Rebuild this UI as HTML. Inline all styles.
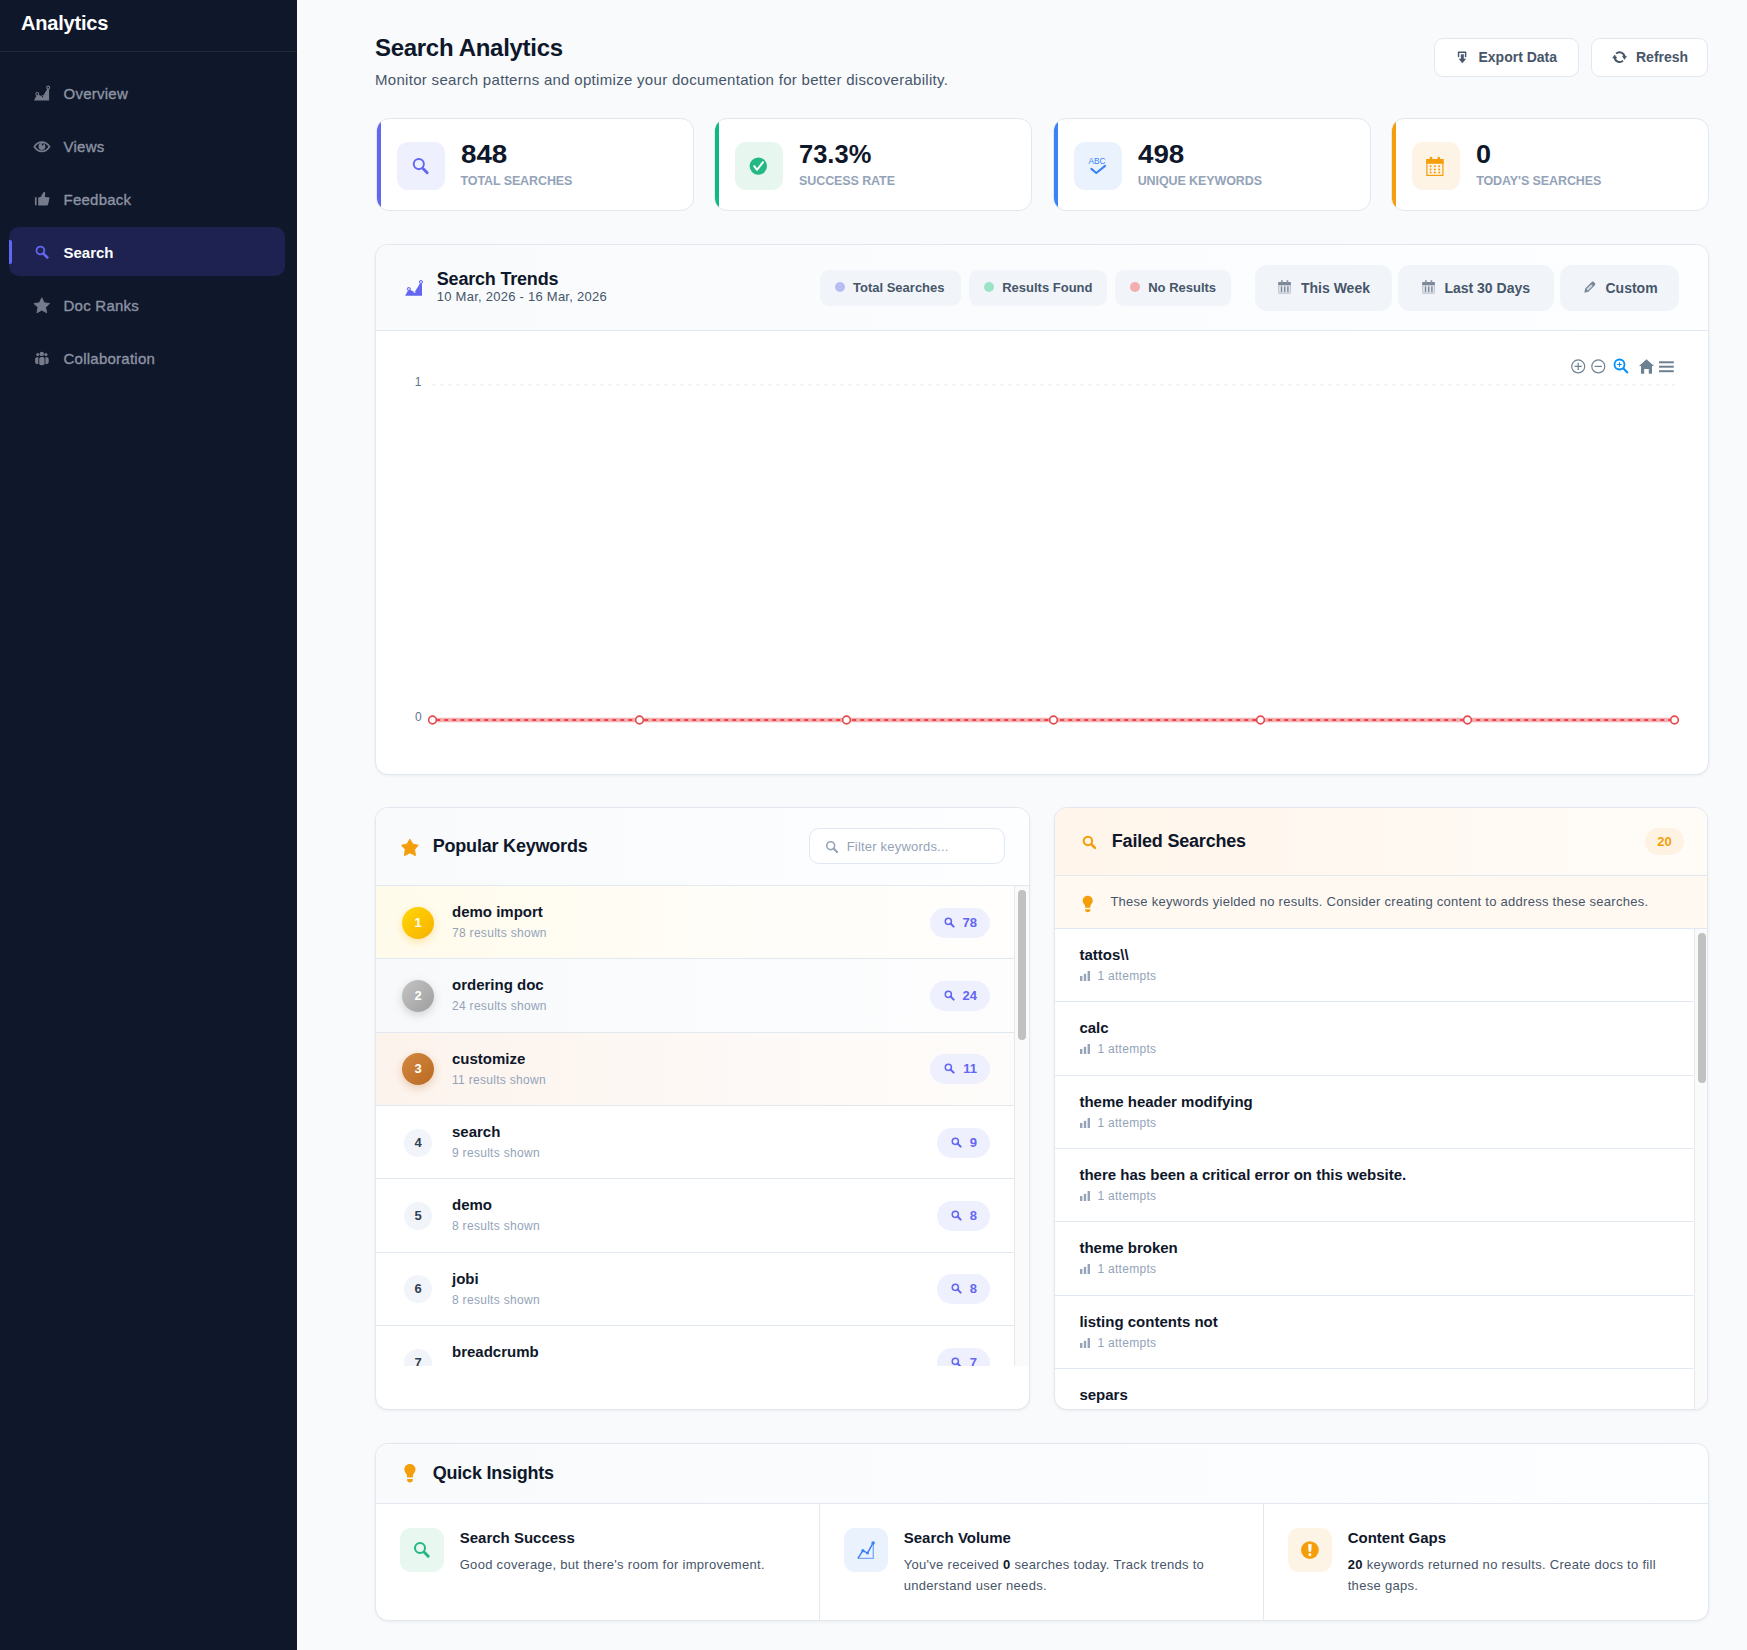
<!DOCTYPE html>
<html><head><meta charset="utf-8">
<style>
*{box-sizing:border-box;margin:0;padding:0}
html,body{width:1747px;height:1650px;overflow:hidden;background:#f8fafc;font-family:"Liberation Sans",sans-serif;color:#0f172a}
.abs{position:absolute}
.nw{white-space:nowrap}
/* sidebar */
#sb{position:absolute;left:0;top:0;width:297px;height:1650px;background:#0f172a}
#sb .brand{position:absolute;left:21px;top:9px;font-size:20px;font-weight:700;color:#fff;line-height:28px;letter-spacing:-0.2px}
#sb .sep{position:absolute;left:0;top:51px;width:297px;height:1px;background:#1f2937}
.nav{position:absolute;left:9px;width:276px;height:49px;border-radius:10px}
.nav .ic{position:absolute;left:19px;top:12px;width:30px;height:30px}
.nav .tx{position:absolute;left:54.5px;top:15.5px;font-size:15px;line-height:20px;font-weight:400;color:#8d93a3;letter-spacing:0.25px;-webkit-text-stroke:0.35px #8d93a3}
.nav.act{background:#1e2250}
.nav.act .tx{color:#fff;font-weight:700;letter-spacing:0;-webkit-text-stroke:0}
.nav.act .bar{position:absolute;left:0;top:13px;width:3px;height:24px;background:#6366f1;border-radius:0 2px 2px 0}
/* main */
.card{position:absolute;background:#fff;border:1px solid #e2e8f0;border-radius:13px;overflow:hidden;box-shadow:0 1px 3px rgba(15,23,42,0.06)}
.btn{position:absolute;height:39px;background:#fff;border:1px solid #e2e8f0;border-radius:9px;font-size:14px;font-weight:700;color:#475569}
.stat{position:absolute;top:118px;height:92.5px;width:318px;background:#fff;border:1px solid #e2e8f0;border-radius:13px;overflow:hidden}
.stat .acc{position:absolute;left:0;top:0;bottom:0;width:4px}
.stat .ib{position:absolute;left:20px;top:22.5px;width:48px;height:48px;border-radius:11px}
.stat .num{position:absolute;left:84px;top:19.9px;font-size:25px;line-height:30px;font-weight:700;color:#0f172a;letter-spacing:0;transform-origin:0 50%}
.stat .lab{position:absolute;left:84px;top:53.8px;font-size:12.5px;line-height:16px;font-weight:700;color:#94a3b8;letter-spacing:-0.1px}
.pill{position:absolute;top:269px;height:36px;background:#f1f5f9;border-radius:9px;font-size:13px;font-weight:700;color:#475569}
.pill .dot{position:absolute;left:15px;top:12.2px;width:10px;height:10px;border-radius:50%}
.pill .t{position:absolute;left:33px;top:10px;line-height:16px}
.rb{position:absolute;top:264.5px;height:46px;background:#f1f5f9;border-radius:12px;font-size:14px;font-weight:700;color:#475569}
.rb svg{position:absolute}
.rb .t{position:absolute;top:14.5px;line-height:18px}
.hdr{position:absolute;left:0;right:0;top:0;background:linear-gradient(90deg,#f8fafc,#fdfeff);border-bottom:1px solid #e2e8f0}
.kw{position:absolute;left:0;width:638px;height:73.33px;border-bottom:1px solid #e2e8f0}
.kw .bd{position:absolute;left:26px;top:20.5px;width:32px;height:32px;border-radius:50%;color:#fff;font-size:13px;font-weight:700;text-align:center;line-height:32px}
.kw .bd.pl{left:28px;top:22.5px;width:28px;height:28px;line-height:28px;background:#f1f5f9;color:#334155}
.kw .nm{position:absolute;left:76px;top:16px;font-size:15px;line-height:20px;font-weight:700;color:#0f172a}
.kw .sub{position:absolute;left:76px;top:39px;font-size:12px;line-height:16px;color:#94a3b8;letter-spacing:0.3px}
.kw .cnt{position:absolute;right:24px;top:21.5px;height:30px;border-radius:15px;background:#eef0fd;color:#6366f1;font-size:13px;font-weight:700;line-height:30px;padding:0 13px 0 14px}
.kw .cnt svg{vertical-align:-1px;margin-right:8px}
.fs{position:absolute;left:0;width:638px;height:73.33px;border-bottom:1px solid #e2e8f0}
.fs .nm{position:absolute;left:24px;top:16px;font-size:15px;line-height:20px;font-weight:700;color:#0f172a}
.fs .sub{position:absolute;left:25px;top:39px;font-size:12px;line-height:16px;color:#94a3b8;letter-spacing:0.3px}
.fs .sub svg{vertical-align:-1px;margin-right:7px}
.sbtrack{position:absolute;width:15px;background:#fafafa;border-left:1px solid #e8e8e8}
.sbthumb{position:absolute;left:3px;width:8px;border-radius:4px;background:#c1c1c1}
.qi{position:absolute;top:61px;height:116px;width:444px}
.qi .ib{position:absolute;left:23.5px;top:23.5px;width:44px;height:44px;border-radius:11px}
.qi .tt{position:absolute;left:83.7px;top:24.3px;font-size:15px;line-height:20px;font-weight:700;color:#0f172a}
.qi .ds{position:absolute;left:83.7px;top:49.8px;width:340px;font-size:13px;line-height:21px;color:#475569;letter-spacing:0.3px}
</style></head><body>

<div id="sb">
  <div class="brand">Analytics</div>
  <div class="sep"></div>
  <div class="nav" style="top:68px">
    <svg class="ic" viewBox="0 0 30 30"><path d="M6 20.4 L9.3 14 L14.5 16.7 L20.2 7.6 L21.1 8.3 L21.1 20.4 Z" fill="#767b8b"/><circle cx="9.3" cy="14" r="1.45" fill="#0f172a" stroke="#767b8b" stroke-width="1.1"/><circle cx="14.5" cy="16.7" r="1.1" fill="#0f172a" stroke="#767b8b" stroke-width="1"/><circle cx="20.2" cy="7.6" r="1.45" fill="#0f172a" stroke="#767b8b" stroke-width="1.1"/></svg>
    <div class="tx">Overview</div>
  </div>
  <div class="nav" style="top:121px">
    <svg class="ic" viewBox="0 0 30 30"><path d="M6.3 13.7 C8.8 9.8 12 9.1 13.9 9.1 C15.8 9.1 19 9.8 21.5 13.7 C19 17.6 15.8 18.3 13.9 18.3 C12 18.3 8.8 17.6 6.3 13.7 Z" fill="none" stroke="#767b8b" stroke-width="1.7"/><circle cx="13.9" cy="13.5" r="3.4" fill="#767b8b"/><circle cx="14.7" cy="11.5" r="0.95" fill="#0f172a"/></svg>
    <div class="tx">Views</div>
  </div>
  <div class="nav" style="top:174px">
    <svg class="ic" viewBox="0 0 30 30"><rect x="6.9" y="11.1" width="1.7" height="8.4" rx="0.8" fill="#767b8b"/><path d="M10.2 11.4 L12.6 11.1 L15.3 6.6 C15.8 5.7 17.3 5.8 17.2 7 L16.9 11.1 L20.6 11.2 C21.3 11.2 21.6 11.8 21.4 12.5 L20.1 18.6 C19.9 19.2 19.4 19.5 18.8 19.5 L10.2 19.5 Z" fill="#767b8b"/></svg>
    <div class="tx">Feedback</div>
  </div>
  <div class="nav act" style="top:227px">
    <div class="bar"></div>
    <svg class="ic" viewBox="0 0 30 30"><circle cx="12.4" cy="11.5" r="3.9" fill="none" stroke="#6366f1" stroke-width="1.8"/><path d="M15.2 14.4 L19.3 18.5" stroke="#6366f1" stroke-width="2.6" stroke-linecap="round"/></svg>
    <div class="tx">Search</div>
  </div>
  <div class="nav" style="top:280px">
    <svg class="ic" viewBox="0 0 30 30"><path d="M13.80 5.80 L16.15 10.86 L21.69 11.54 L17.60 15.34 L18.68 20.81 L13.80 18.10 L8.92 20.81 L10.00 15.34 L5.91 11.54 L11.45 10.86 Z" fill="#767b8b" stroke="#767b8b" stroke-width="0.9" stroke-linejoin="round"/></svg>
    <div class="tx">Doc Ranks</div>
  </div>
  <div class="nav" style="top:333px">
    <svg class="ic" viewBox="0 0 30 30"><circle cx="13.8" cy="8.9" r="2.2" fill="#767b8b"/><circle cx="9.8" cy="9.5" r="1.6" fill="#767b8b"/><circle cx="17.9" cy="9.5" r="1.6" fill="#767b8b"/><rect x="11.2" y="12" width="5.4" height="8.2" rx="2" fill="#767b8b"/><path d="M7.1 14.5 C7.1 12.8 8.2 12.2 9.5 12.2 L10.3 12.2 L10.3 19.1 L9.3 19.1 C8 19.1 7.1 18.2 7.1 16.8 Z" fill="#767b8b"/><path d="M20.7 14.5 C20.7 12.8 19.6 12.2 18.3 12.2 L17.4 12.2 L17.4 19.1 L18.5 19.1 C19.8 19.1 20.7 18.2 20.7 16.8 Z" fill="#767b8b"/></svg>
    <div class="tx">Collaboration</div>
  </div>
</div>

<!-- page header -->
<div class="abs nw" style="left:375px;top:32px;font-size:24px;line-height:32px;font-weight:700;color:#0f172a;letter-spacing:-0.3px">Search Analytics</div>
<div class="abs nw" style="left:375px;top:68.5px;font-size:15px;line-height:22px;color:#475569;letter-spacing:0.3px">Monitor search patterns and optimize your documentation for better discoverability.</div>

<div class="btn" style="left:1433.5px;top:37.5px;width:145px">
  <svg class="abs" style="left:17.5px;top:6.5px" width="20" height="23" viewBox="0 0 20 23"><path d="M6.55 11.6 V7.25 H13.65 V11.6" fill="none" stroke="#475569" stroke-width="1.45" stroke-linecap="round" stroke-linejoin="round"/><path d="M9.06 9.5 H11.7 V13.9 H13.7 L10.35 18.1 L7.1 13.9 H9.06 Z" fill="#475569" stroke="#475569" stroke-width="0.4" stroke-linejoin="round"/></svg>
  <div class="abs nw" style="left:44px;top:9.2px;line-height:18px">Export Data</div>
</div>
<div class="btn" style="left:1591px;top:37.5px;width:117px">
  <svg class="abs" style="left:16px;top:6.5px" width="23" height="23" viewBox="0 0 23 23"><path d="M8.1 8.67 A4.9 4.9 0 0 1 16.47 12.13" fill="none" stroke="#475569" stroke-width="1.9"/><path d="M14.4 11.2 H18.6 L16.5 14.4 Z" fill="#475569" stroke="#475569" stroke-width="0.5" stroke-linejoin="round"/><path d="M6.67 12.13 A4.9 4.9 0 0 0 15.03 15.59" fill="none" stroke="#475569" stroke-width="1.9"/><path d="M4.6 13.1 H8.8 L6.7 9.9 Z" fill="#475569" stroke="#475569" stroke-width="0.5" stroke-linejoin="round"/></svg>
  <div class="abs nw" style="left:44px;top:9.6px;line-height:18px">Refresh</div>
</div>

<!-- stat cards -->
<div class="stat" style="left:375.5px">
  <div class="acc" style="background:#6366f1"></div>
  <div class="ib" style="background:#eef0fe"><svg class="abs" style="left:0;top:0" width="48" height="48" viewBox="0 0 48 48"><circle cx="21.8" cy="22.1" r="5.05" fill="none" stroke="#6366f1" stroke-width="1.95"/><path d="M26 26.5 L30.2 30.7" stroke="#6366f1" stroke-width="2.9" stroke-linecap="round"/></svg></div>
  <div class="num" style="transform:scaleX(1.11)">848</div>
  <div class="lab">TOTAL SEARCHES</div>
</div>
<div class="stat" style="left:714.1px">
  <div class="acc" style="background:#10b981"></div>
  <div class="ib" style="background:#e7f7f0"><svg class="abs" style="left:0;top:0" width="48" height="48" viewBox="0 0 48 48"><circle cx="23.3" cy="24.1" r="8.7" fill="#24b883"/><path d="M19.2 24.2 L22 27.8 L28 20.2" fill="none" stroke="#fff" stroke-width="2" stroke-linecap="round" stroke-linejoin="round"/></svg></div>
  <div class="num" style="transform:scaleX(1.02)">73.3%</div>
  <div class="lab">SUCCESS RATE</div>
</div>
<div class="stat" style="left:1052.7px">
  <div class="acc" style="background:#3b82f6"></div>
  <div class="ib" style="background:#eaf2fe"><svg class="abs" style="left:0;top:0" width="48" height="48" viewBox="0 0 48 48"><text x="23" y="22" text-anchor="middle" font-family="Liberation Sans" font-size="9.3" fill="#3b82f6" textLength="17" lengthAdjust="spacingAndGlyphs">ABC</text><path d="M17.4 26.9 L22.3 31 L31.1 23.9" fill="none" stroke="#3b82f6" stroke-width="2.1" stroke-linecap="round" stroke-linejoin="round"/></svg></div>
  <div class="num" style="transform:scaleX(1.11)">498</div>
  <div class="lab">UNIQUE KEYWORDS</div>
</div>
<div class="stat" style="left:1391.2px">
  <div class="acc" style="background:#f59e0b"></div>
  <div class="ib" style="background:#fef4e6"><svg class="abs" style="left:0;top:0" width="48" height="48" viewBox="0 0 48 48"><rect x="14.9" y="17.6" width="16" height="15.8" fill="none" stroke="#f59e0b" stroke-width="1.2"/><rect x="14.3" y="17" width="17.2" height="4.8" fill="#f59e0b"/><rect x="17.7" y="14.8" width="2.5" height="5" rx="1.2" fill="#f59e0b"/><rect x="25.5" y="14.8" width="2.5" height="5" rx="1.2" fill="#f59e0b"/><g fill="#f59e0b"><circle cx="18.6" cy="24.2" r="1"/><circle cx="22.8" cy="24.2" r="1"/><circle cx="27.2" cy="24.2" r="1"/><circle cx="18.6" cy="27.4" r="1"/><circle cx="22.8" cy="27.4" r="1"/><circle cx="27.2" cy="27.4" r="1"/><circle cx="18.6" cy="30.6" r="1"/><circle cx="22.8" cy="30.6" r="1"/><circle cx="27.2" cy="30.6" r="1"/></g></svg></div>
  <div class="num" style="transform:scaleX(1.08)">0</div>
  <div class="lab">TODAY'S SEARCHES</div>
</div>

<!-- trends card -->
<div class="card" style="left:375px;top:243.5px;width:1333.5px;height:531.5px">
  <div class="hdr" style="height:86.5px"></div>
  <svg class="abs" style="left:24px;top:28px" width="28" height="28" viewBox="0 0 28 28"><path d="M5.1 22.7 L8.8 16 L14.6 19.2 L20.9 9 L22 10 L22 22.7 Z" fill="#6366f1"/><circle cx="8.8" cy="15.95" r="1.55" fill="#c9cafb" stroke="#6e71f3" stroke-width="1"/><circle cx="14.6" cy="19.2" r="0.9" fill="#d9dafc"/><circle cx="20.9" cy="9" r="1.6" fill="#c9cafb" stroke="#6e71f3" stroke-width="1"/></svg>
  <div class="abs nw" style="left:60.8px;top:23px;font-size:18px;line-height:22px;font-weight:700;color:#0f172a;letter-spacing:-0.2px">Search Trends</div>
  <div class="abs nw" style="left:60.8px;top:44.7px;font-size:13px;line-height:16px;color:#475569;letter-spacing:0.25px">10 Mar, 2026 - 16 Mar, 2026</div>
  <div class="pill" style="left:444px;top:25px;width:140.8px"><div class="dot" style="background:#babdf4"></div><div class="t nw">Total Searches</div></div>
  <div class="pill" style="left:593.2px;top:25px;width:137.4px"><div class="dot" style="background:#9be3c6"></div><div class="t nw">Results Found</div></div>
  <div class="pill" style="left:739.2px;top:25px;width:115.7px"><div class="dot" style="background:#f3aeb0"></div><div class="t nw">No Results</div></div>
  <div class="rb" style="left:879.2px;top:20px;width:136.4px"><svg style="left:18.8px;top:12.6px" width="22" height="22" viewBox="0 0 22 22"><rect x="4.2" y="5.2" width="12.7" height="11.5" rx="1" fill="#b9c2cd"/><rect x="4.2" y="5.1" width="12.7" height="3" rx="0.6" fill="#7b8898"/><rect x="7.05" y="3" width="1.7" height="3.6" rx="0.85" fill="#8a96a5"/><rect x="12.6" y="3" width="1.7" height="3.6" rx="0.85" fill="#8a96a5"/><rect x="5.2" y="8.7" width="10.7" height="7.1" fill="#e3e8ee"/><g fill="#7b8898"><rect x="6.8" y="9.3" width="1.4" height="5.9" rx="0.5"/><rect x="10" y="9.3" width="1.4" height="5.9" rx="0.5"/><rect x="13.2" y="9.3" width="1.4" height="5.9" rx="0.5"/></g></svg><div class="t nw" style="left:45.8px">This Week</div></div>
  <div class="rb" style="left:1022.3px;top:20px;width:155.3px"><svg style="left:19.5px;top:12.6px" width="22" height="22" viewBox="0 0 22 22"><rect x="4.2" y="5.2" width="12.7" height="11.5" rx="1" fill="#b9c2cd"/><rect x="4.2" y="5.1" width="12.7" height="3" rx="0.6" fill="#7b8898"/><rect x="7.05" y="3" width="1.7" height="3.6" rx="0.85" fill="#8a96a5"/><rect x="12.6" y="3" width="1.7" height="3.6" rx="0.85" fill="#8a96a5"/><rect x="5.2" y="8.7" width="10.7" height="7.1" fill="#e3e8ee"/><g fill="#7b8898"><rect x="6.8" y="9.3" width="1.4" height="5.9" rx="0.5"/><rect x="10" y="9.3" width="1.4" height="5.9" rx="0.5"/><rect x="13.2" y="9.3" width="1.4" height="5.9" rx="0.5"/></g></svg><div class="t nw" style="left:46.1px">Last 30 Days</div></div>
  <div class="rb" style="left:1184.3px;top:20px;width:119.2px"><svg style="left:19.7px;top:12.6px" width="22" height="22" viewBox="0 0 22 22"><path d="M4.3 15.7 L5.2 11.6 L11.7 5 C12.3 4.4 13.2 4.4 13.8 5 L14.9 6.1 C15.5 6.7 15.5 7.6 14.9 8.2 L8.4 14.8 Z" fill="#7b8898"/><path d="M6.4 12.1 L11.1 7.4 L12.6 8.9 L7.9 13.6 Z" fill="#d3d9e1"/></svg><div class="t nw" style="left:45.2px">Custom</div></div>
</div>
<svg class="abs" style="left:376px;top:331px" width="1331" height="443" viewBox="0 0 1331 443">
  <text x="45.5" y="55" text-anchor="end" font-family="Liberation Sans" font-size="12" fill="#64748b">1</text>
  <text x="45.8" y="390" text-anchor="end" font-family="Liberation Sans" font-size="12" fill="#64748b">0</text>
  <line x1="56" y1="54" x2="1299" y2="54" stroke="#e5e9f0" stroke-width="1" stroke-dasharray="4 4"/>
  <line x1="56.5" y1="389" x2="1298.5" y2="389" stroke="#f2b0b2" stroke-width="4.3"/>
  <line x1="56.5" y1="389" x2="1298.5" y2="389" stroke="#ef4444" stroke-width="2.2" stroke-dasharray="4 4" stroke-dashoffset="4.3"/>
  <g fill="#fff" stroke="#e5484d" stroke-width="1.6">
    <circle cx="56.5" cy="389" r="3.85"/><circle cx="263.5" cy="389" r="3.85"/><circle cx="470.5" cy="389" r="3.85"/><circle cx="677.5" cy="389" r="3.85"/><circle cx="884.5" cy="389" r="3.85"/><circle cx="1091.5" cy="389" r="3.85"/><circle cx="1298.5" cy="389" r="3.85"/>
  </g>
  <!-- toolbar -->
  <g fill="none" stroke="#6e8192" stroke-width="1.2">
    <circle cx="1202.2" cy="35.4" r="6.5"/><path d="M1198.6 35.4 H1205.8 M1202.2 31.8 V39"/>
    <circle cx="1222.3" cy="35.4" r="6.5"/><path d="M1218.7 35.4 H1225.9"/>
  </g>
  <g fill="none" stroke="#008ffb" stroke-width="1.8">
    <circle cx="1243.5" cy="33.5" r="5"/><path d="M1247 37 L1251.8 42" stroke-width="2"/><path d="M1241.3 33.5 H1245.7 M1243.5 31.3 V35.7" stroke-width="1.1"/>
  </g>
  <path d="M1270.5 28.3 L1278 35 L1276 35 L1276 42.8 L1272.8 42.8 L1272.8 38 L1268.2 38 L1268.2 42.8 L1265 42.8 L1265 35 L1263 35 Z" fill="#6e8192"/>
  <g fill="#6e8192"><rect x="1283" y="30.3" width="14.8" height="2"/><rect x="1283" y="34.7" width="14.8" height="2"/><rect x="1283" y="39.2" width="14.8" height="2"/></g>
</svg>

<!-- keywords card -->
<div class="card" style="left:375px;top:807px;width:655px;height:603px">
  <div class="hdr" style="height:78px"></div>
  <svg class="abs" style="left:20px;top:26px" width="28" height="28" viewBox="0 0 28 28"><path d="M13.9 5.1 L16.75 10 L22.2 11.2 L18.6 15.4 L19.5 21.7 L13.9 18.9 L8.4 21.7 L9.2 15.4 L5.6 11.2 L11.05 10 Z" fill="#f59e0b" stroke="#f59e0b" stroke-width="0.9" stroke-linejoin="round"/></svg>
  <div class="abs nw" style="left:56.7px;top:27px;font-size:18px;line-height:22px;font-weight:700;color:#0f172a;letter-spacing:-0.2px">Popular Keywords</div>
  <div class="abs" style="left:433.3px;top:20.3px;width:195.4px;height:36.2px;background:#fff;border:1px solid #e2e8f0;border-radius:10px">
    <svg class="abs" style="left:15px;top:11px" width="14" height="14" viewBox="0 0 16 16"><circle cx="6.5" cy="6.5" r="4.5" fill="none" stroke="#94a3b8" stroke-width="1.8"/><path d="M9.8 9.8 L13.8 13.8" stroke="#94a3b8" stroke-width="2.4" stroke-linecap="round"/></svg>
    <div class="abs nw" style="left:36.4px;top:9.6px;font-size:13px;line-height:16px;color:#94a3b8;letter-spacing:0.2px">Filter keywords...</div>
  </div>
  <div class="abs" style="left:0;top:78px;width:653px;height:480px;overflow:hidden">
    <div class="kw" style="top:0;background:linear-gradient(90deg,#fffbeb,#fffdf9 60%,#fffefc)"><div class="bd" style="background:linear-gradient(135deg,#ffd60a 0%,#fcc400 50%,#f5b000 100%);box-shadow:0 3px 8px rgba(245,176,0,0.3)">1</div><div class="nm nw">demo import</div><div class="sub nw">78 results shown</div><div class="cnt nw"><svg width="11" height="11" viewBox="0 0 16 16"><circle cx="6.3" cy="6.3" r="4.5" fill="none" stroke="#6366f1" stroke-width="2.2"/><path d="M9.6 9.6 L14 14" stroke="#6366f1" stroke-width="3" stroke-linecap="round"/></svg>78</div></div>
    <div class="kw" style="top:73.33px;background:linear-gradient(90deg,#f7f9fb,#fbfcfd 60%,#fdfdfe)"><div class="bd" style="background:linear-gradient(135deg,#c4c4c4,#9e9e9e);box-shadow:0 3px 8px rgba(120,120,120,0.3)">2</div><div class="nm nw">ordering doc</div><div class="sub nw">24 results shown</div><div class="cnt nw"><svg width="11" height="11" viewBox="0 0 16 16"><circle cx="6.3" cy="6.3" r="4.5" fill="none" stroke="#6366f1" stroke-width="2.2"/><path d="M9.6 9.6 L14 14" stroke="#6366f1" stroke-width="3" stroke-linecap="round"/></svg>24</div></div>
    <div class="kw" style="top:146.67px;background:linear-gradient(90deg,#fcf3ec,#fdf9f6 60%,#fefcfa)"><div class="bd" style="background:linear-gradient(135deg,#d4883e,#b96a24);box-shadow:0 3px 8px rgba(185,106,36,0.3)">3</div><div class="nm nw">customize</div><div class="sub nw">11 results shown</div><div class="cnt nw"><svg width="11" height="11" viewBox="0 0 16 16"><circle cx="6.3" cy="6.3" r="4.5" fill="none" stroke="#6366f1" stroke-width="2.2"/><path d="M9.6 9.6 L14 14" stroke="#6366f1" stroke-width="3" stroke-linecap="round"/></svg>11</div></div>
    <div class="kw" style="top:220px"><div class="bd pl">4</div><div class="nm nw">search</div><div class="sub nw">9 results shown</div><div class="cnt nw"><svg width="11" height="11" viewBox="0 0 16 16"><circle cx="6.3" cy="6.3" r="4.5" fill="none" stroke="#6366f1" stroke-width="2.2"/><path d="M9.6 9.6 L14 14" stroke="#6366f1" stroke-width="3" stroke-linecap="round"/></svg>9</div></div>
    <div class="kw" style="top:293.33px"><div class="bd pl">5</div><div class="nm nw">demo</div><div class="sub nw">8 results shown</div><div class="cnt nw"><svg width="11" height="11" viewBox="0 0 16 16"><circle cx="6.3" cy="6.3" r="4.5" fill="none" stroke="#6366f1" stroke-width="2.2"/><path d="M9.6 9.6 L14 14" stroke="#6366f1" stroke-width="3" stroke-linecap="round"/></svg>8</div></div>
    <div class="kw" style="top:366.67px"><div class="bd pl">6</div><div class="nm nw">jobi</div><div class="sub nw">8 results shown</div><div class="cnt nw"><svg width="11" height="11" viewBox="0 0 16 16"><circle cx="6.3" cy="6.3" r="4.5" fill="none" stroke="#6366f1" stroke-width="2.2"/><path d="M9.6 9.6 L14 14" stroke="#6366f1" stroke-width="3" stroke-linecap="round"/></svg>8</div></div>
    <div class="kw" style="top:440px"><div class="bd pl">7</div><div class="nm nw">breadcrumb</div><div class="sub nw">7 results shown</div><div class="cnt nw"><svg width="11" height="11" viewBox="0 0 16 16"><circle cx="6.3" cy="6.3" r="4.5" fill="none" stroke="#6366f1" stroke-width="2.2"/><path d="M9.6 9.6 L14 14" stroke="#6366f1" stroke-width="3" stroke-linecap="round"/></svg>7</div></div>
    <div class="sbtrack" style="left:638px;top:0;height:480px"><div class="sbthumb" style="top:3.5px;height:150px"></div></div>
  </div>
</div>

<!-- failed card -->
<div class="card" style="left:1054.4px;top:807px;width:654px;height:603px">
  <div class="hdr" style="height:68px;background:linear-gradient(90deg,#fff5ea,#fffcf8)"></div>
  <svg class="abs" style="left:26.5px;top:26.7px" width="15" height="15" viewBox="0 0 16 16"><circle cx="6.3" cy="6.3" r="4.5" fill="none" stroke="#f59e0b" stroke-width="2.2"/><path d="M9.8 9.8 L13.8 13.8" stroke="#f59e0b" stroke-width="2.8" stroke-linecap="round"/></svg>
  <div class="abs nw" style="left:56.4px;top:21.8px;font-size:18px;line-height:22px;font-weight:700;color:#0f172a;letter-spacing:-0.2px">Failed Searches</div>
  <div class="abs" style="left:589.2px;top:20.1px;width:39.7px;height:27px;border-radius:14px;background:#fef3e2;color:#f59e0b;font-size:13px;font-weight:700;line-height:27px;text-align:center">20</div>
  <div class="abs" style="left:0;top:68px;width:652px;height:53px;background:#fff9f2;border-bottom:1px solid #e2e8f0">
    <svg class="abs" style="left:22px;top:15.5px" width="21.6" height="23.4" viewBox="0 0 24 26"><path d="M11.9 4.1 C15 4.1 17.5 6.5 17.5 9.6 C17.5 11.6 16.3 12.9 15.3 14.5 C14.9 15.2 14.8 16 14.8 17.6 L9.1 17.6 C9.1 16 9 15.2 8.6 14.5 C7.6 12.9 6.3 11.6 6.3 9.6 C6.3 6.5 8.8 4.1 11.9 4.1 Z" fill="#f59e0b"/><path d="M9.1 19.1 H14.8 V20.3 C14.8 21.5 13.6 22.4 11.95 22.4 C10.3 22.4 9.1 21.5 9.1 20.3 Z" fill="#f59e0b"/></svg>
    <div class="abs nw" style="left:55px;top:17.6px;font-size:13px;line-height:16px;color:#475569;letter-spacing:0.27px">These keywords yielded no results. Consider creating content to address these searches.</div>
  </div>
  <div class="abs" style="left:0;top:121px;width:652px;height:481px;overflow:hidden">
    <div class="fs" style="top:0"><div class="nm nw">tattos\\</div><div class="sub nw"><svg width="10" height="10" viewBox="0 0 10 10"><rect x="0" y="5" width="2.4" height="5" fill="#94a3b8"/><rect x="3.8" y="2.8" width="2.4" height="7.2" fill="#94a3b8"/><rect x="7.6" y="0" width="2.4" height="10" fill="#94a3b8"/></svg>1 attempts</div></div>
    <div class="fs" style="top:73.33px"><div class="nm nw">calc</div><div class="sub nw"><svg width="10" height="10" viewBox="0 0 10 10"><rect x="0" y="5" width="2.4" height="5" fill="#94a3b8"/><rect x="3.8" y="2.8" width="2.4" height="7.2" fill="#94a3b8"/><rect x="7.6" y="0" width="2.4" height="10" fill="#94a3b8"/></svg>1 attempts</div></div>
    <div class="fs" style="top:146.67px"><div class="nm nw">theme header modifying</div><div class="sub nw"><svg width="10" height="10" viewBox="0 0 10 10"><rect x="0" y="5" width="2.4" height="5" fill="#94a3b8"/><rect x="3.8" y="2.8" width="2.4" height="7.2" fill="#94a3b8"/><rect x="7.6" y="0" width="2.4" height="10" fill="#94a3b8"/></svg>1 attempts</div></div>
    <div class="fs" style="top:220px"><div class="nm nw">there has been a critical error on this website.</div><div class="sub nw"><svg width="10" height="10" viewBox="0 0 10 10"><rect x="0" y="5" width="2.4" height="5" fill="#94a3b8"/><rect x="3.8" y="2.8" width="2.4" height="7.2" fill="#94a3b8"/><rect x="7.6" y="0" width="2.4" height="10" fill="#94a3b8"/></svg>1 attempts</div></div>
    <div class="fs" style="top:293.33px"><div class="nm nw">theme broken</div><div class="sub nw"><svg width="10" height="10" viewBox="0 0 10 10"><rect x="0" y="5" width="2.4" height="5" fill="#94a3b8"/><rect x="3.8" y="2.8" width="2.4" height="7.2" fill="#94a3b8"/><rect x="7.6" y="0" width="2.4" height="10" fill="#94a3b8"/></svg>1 attempts</div></div>
    <div class="fs" style="top:366.67px"><div class="nm nw">listing contents not</div><div class="sub nw"><svg width="10" height="10" viewBox="0 0 10 10"><rect x="0" y="5" width="2.4" height="5" fill="#94a3b8"/><rect x="3.8" y="2.8" width="2.4" height="7.2" fill="#94a3b8"/><rect x="7.6" y="0" width="2.4" height="10" fill="#94a3b8"/></svg>1 attempts</div></div>
    <div class="fs" style="top:440px"><div class="nm nw">separs</div><div class="sub nw"><svg width="10" height="10" viewBox="0 0 10 10"><rect x="0" y="5" width="2.4" height="5" fill="#94a3b8"/><rect x="3.8" y="2.8" width="2.4" height="7.2" fill="#94a3b8"/><rect x="7.6" y="0" width="2.4" height="10" fill="#94a3b8"/></svg>1 attempts</div></div>
    <div class="sbtrack" style="left:638.4px;top:0;height:481px"><div class="sbthumb" style="top:3.5px;height:150px"></div></div>
  </div>
</div>

<!-- quick insights -->
<div class="card" style="left:375px;top:1442.5px;width:1333.5px;height:178px">
  <div class="hdr" style="height:60.5px"></div>
  <svg class="abs" style="left:21.5px;top:16.5px" width="24" height="26" viewBox="0 0 24 26"><path d="M11.9 4.1 C15 4.1 17.5 6.5 17.5 9.6 C17.5 11.6 16.3 12.9 15.3 14.5 C14.9 15.2 14.8 16 14.8 17.6 L9.1 17.6 C9.1 16 9 15.2 8.6 14.5 C7.6 12.9 6.3 11.6 6.3 9.6 C6.3 6.5 8.8 4.1 11.9 4.1 Z" fill="#f59e0b"/><path d="M9.1 19.1 H14.8 V20.3 C14.8 21.5 13.6 22.4 11.95 22.4 C10.3 22.4 9.1 21.5 9.1 20.3 Z" fill="#f59e0b"/></svg>
  <div class="abs nw" style="left:56.7px;top:18.4px;font-size:18px;line-height:22px;font-weight:700;color:#0f172a;letter-spacing:-0.2px">Quick Insights</div>
  <div class="qi" style="left:0;top:60.5px">
    <div class="ib" style="background:#e8f8f1"><svg class="abs" style="left:0;top:0" width="44" height="44" viewBox="0 0 44 44"><circle cx="20" cy="20" r="5" fill="none" stroke="#24b883" stroke-width="2.05"/><path d="M24.3 24.3 L28.2 28.2" stroke="#24b883" stroke-width="3" stroke-linecap="round"/></svg></div>
    <div class="tt nw">Search Success</div>
    <div class="ds">Good coverage, but there's room for improvement.</div>
  </div>
  <div class="qi" style="left:443px;top:60.5px;border-left:1px solid #e2e8f0">
    <div class="ib" style="background:#eaf2fe"><svg class="abs" style="left:0;top:0" width="44" height="44" viewBox="0 0 44 44"><path d="M13.9 30.4 H29.3 V15.2" fill="none" stroke="#7aa7f7" stroke-width="1.3"/><path d="M13.9 30.4 L18.9 22.7 L23.5 25.1 L29.1 14.9" fill="none" stroke="#3b82f6" stroke-width="1.5" stroke-linejoin="round"/><circle cx="18.9" cy="22.7" r="1.6" fill="#3b82f6"/><circle cx="23.5" cy="25.1" r="1.5" fill="#3b82f6"/><circle cx="29.1" cy="15" r="1.8" fill="#3b82f6"/></svg></div>
    <div class="tt nw">Search Volume</div>
    <div class="ds">You've received <b style="color:#0f172a">0</b> searches today. Track trends to understand user needs.</div>
  </div>
  <div class="qi" style="left:887px;top:60.5px;border-left:1px solid #e2e8f0">
    <div class="ib" style="background:#fef4e6"><svg class="abs" style="left:0;top:0" width="44" height="44" viewBox="0 0 44 44"><circle cx="21.9" cy="22.1" r="8.87" fill="#f59e0b"/><path d="M20.4 16.3 H23.4 L23 23.5 H20.8 Z" fill="#fff" stroke="#fff" stroke-width="0.4" stroke-linejoin="round"/><circle cx="21.9" cy="26.7" r="1.45" fill="#fff"/></svg></div>
    <div class="tt nw">Content Gaps</div>
    <div class="ds"><b style="color:#0f172a">20</b> keywords returned no results. Create docs to fill these gaps.</div>
  </div>
</div>

</body></html>
